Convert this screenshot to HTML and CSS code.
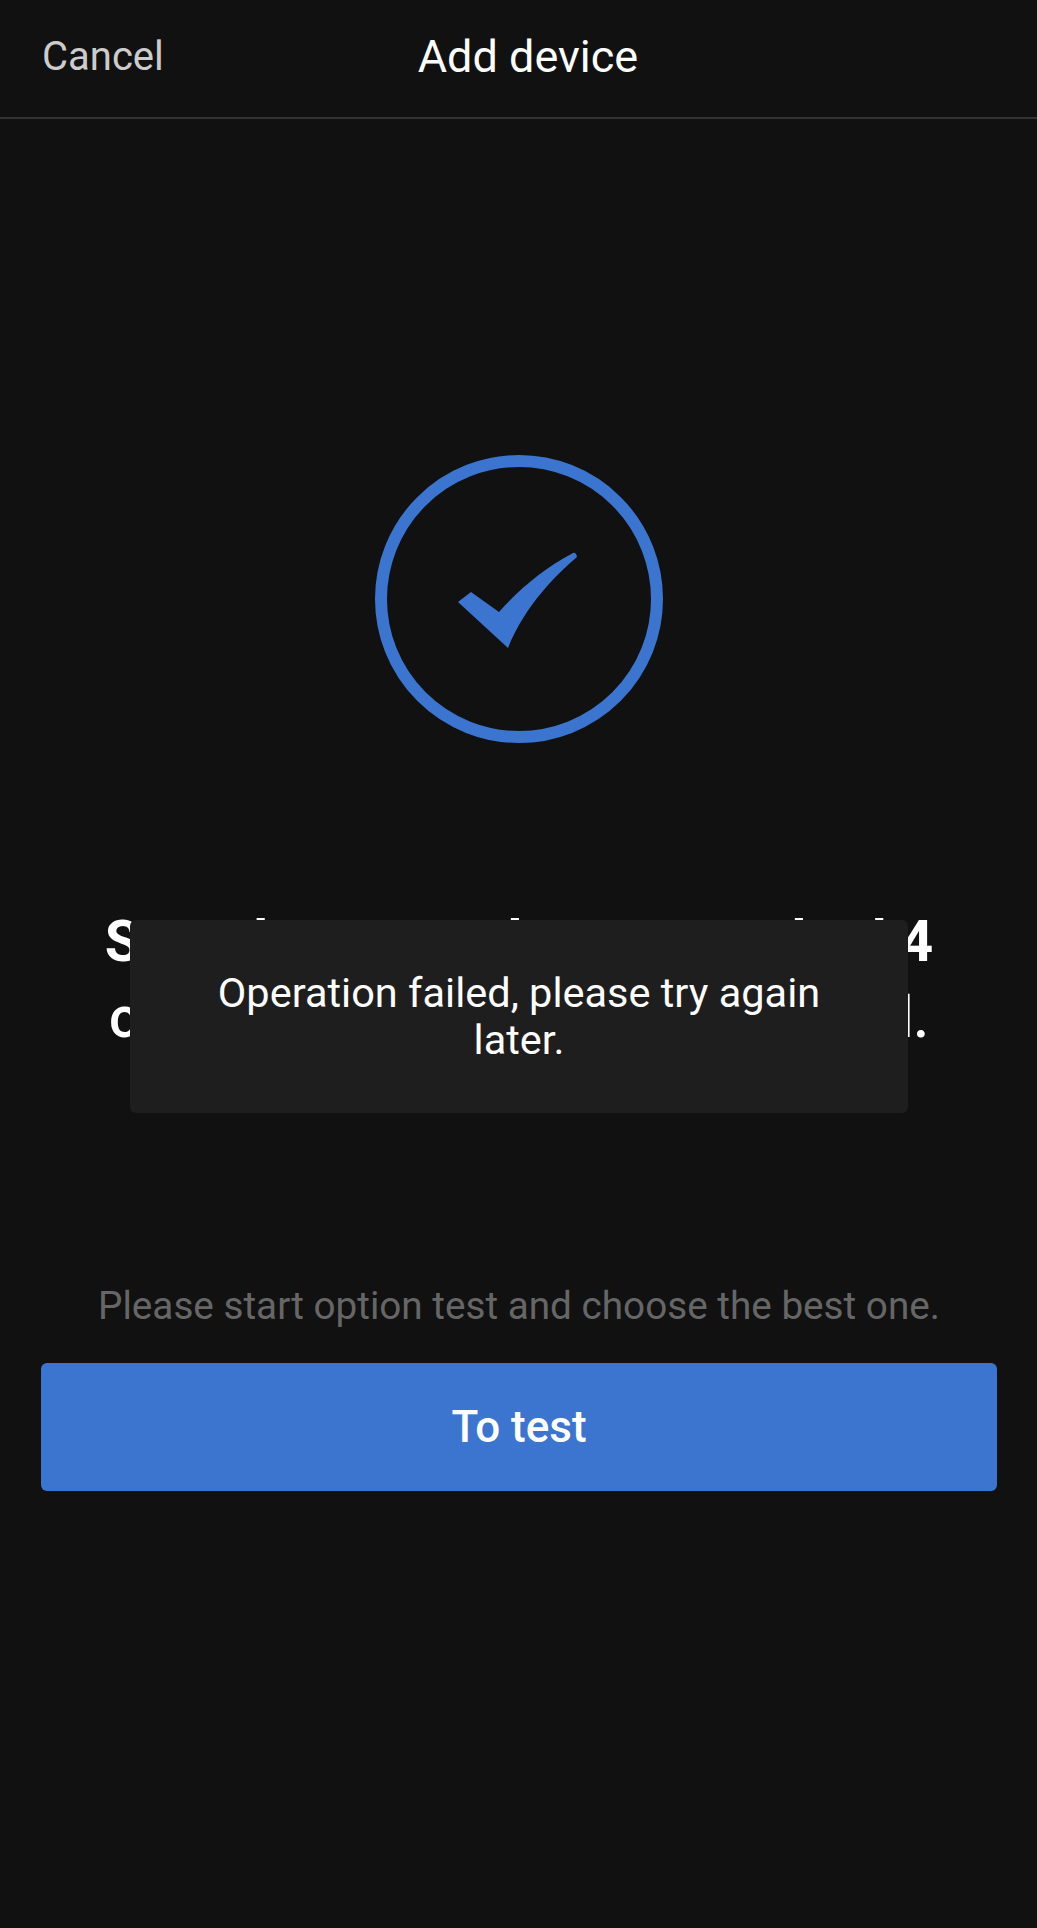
FILE: index.html
```html
<!DOCTYPE html>
<html>

<head>
    <title>Add device</title>
    <link rel="stylesheet" href="styles.css">
</head>

<body>
    <header class="topbar">
        <span class="cancel">Cancel</span>
        <h1 class="title">Add device</h1>
    </header>
    <main class="content">
        <svg class="status-icon" viewBox="0 0 288 288">
            <circle cx="144" cy="144" r="138" fill="none" stroke="#3b75d0" stroke-width="12" />
            <path d="M83 147 L96 137 L124 157 C145 133 170 113 198 98 Q201 97 202 102 C183 118 150 150 133 193 Z" fill="#3b75d0" />
        </svg>
        <p class="result">
            <span class="result-top">Sound wave and scan now had 4</span><br>
            channels, tests were successful.
        </p>
        <p class="hint">Please start option test and choose the best one.</p>
        <button class="test-button">To test</button>
    </main>
    <div class="toast">Operation failed, please try again later.</div>
</body>

</html>
```
FILE: styles.css
```css
body {
    font-family: Roboto, sans-serif;
    background-color: #111;
    margin: 0;
    padding: 0;
    height: 1928px;
    overflow: hidden;
    position: relative;
}

.topbar {
    display: flex;
    align-items: center;
    gap: 254px;
    height: 112px;
    padding: 0 0 5px 42px;
    border-bottom: 2px solid #333;
}

.cancel {
    font-size: 40px;
    color: #ccc;
}

.title {
    font-size: 45px;
    font-weight: 400;
    color: #fff;
    margin: 0;
}

.content {
    display: flex;
    flex-direction: column;
    align-items: center;
    padding: 336px 40px 0 41px;
}

.status-icon {
    width: 288px;
    height: 288px;
}

.result {
    font-size: 56.5px;
    line-height: 76px;
    font-weight: 500;
    color: #fff;
    text-align: center;
    white-space: nowrap;
    margin: 161px 0 0 0;
}

.result-top {
    font-size: 57px;
    font-weight: 700;
}

.hint {
    font-size: 38.7px;
    line-height: 44px;
    color: #666;
    margin: 228px 0 0 0;
}

.test-button {
    width: 100%;
    height: 128px;
    margin-top: 35px;
    font-family: Roboto, sans-serif;
    font-size: 44px;
    font-weight: 500;
    color: #fff;
    background-color: #3b75d0;
    border: none;
    border-radius: 6px;
}

.toast {
    position: absolute;
    top: 920px;
    left: 130px;
    width: 678px;
    padding: 49px 50px 50px;
    font-size: 41.5px;
    line-height: 47px;
    color: #fff;
    text-align: center;
    background-color: #1e1e1e;
    border-radius: 6px;
}
```
